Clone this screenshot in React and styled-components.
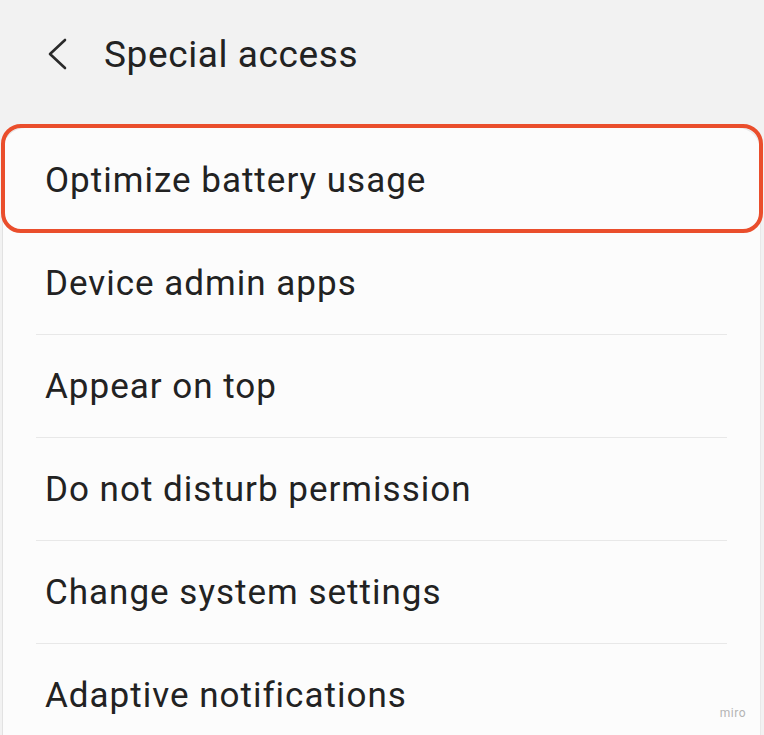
import { styled, createGlobalStyle } from 'styled-components';

const GlobalStyle = createGlobalStyle`
    html, body {
        margin: 0;
        padding: 0;
        background: #f2f2f2;
        font-family: Roboto, "Noto Sans", sans-serif;
    }
`;

const Page = styled.div`
    width: 764px;
    height: 735px;
    overflow: hidden;
    position: relative;
    background: #f2f2f2;
`;

const Header = styled.div`
    display: flex;
    align-items: center;
    height: 108px;
    padding-left: 46px;
    gap: 34px;
`;

const BackButton = styled.div`
    display: flex;
    align-items: center;
    width: 24px;
    height: 34px;
`;

const Title = styled.h1`
    margin: 0;
    font-size: 37px;
    font-weight: 400;
    color: #222;
    letter-spacing: 0.6px;
`;

const Card = styled.div`
    margin: 20px 4px 0 3px;
    background: #fcfcfc;
    border-radius: 22px 22px 0 0;
    box-shadow: -1px 0 0 #e2e2e2, 1px 0 0 #e8e8e8, 0 -1px 0 #e8e8e8;
    height: 620px;
`;

const Row = styled.div`
    position: relative;
    display: flex;
    align-items: center;
    height: 102px;
    margin: 0 33px;
    padding-left: 9px;
    border-top: 1px solid ${(p) => (p.$plain ? 'transparent' : '#e8e8e8')};
    font-size: 35px;
    letter-spacing: 1px;
    color: #222;

    ${(p) =>
        p.$highlighted &&
        `
        &::after {
            content: '';
            position: absolute;
            top: -5px;
            left: -35px;
            right: -36px;
            bottom: -2px;
            border: 4px solid #ea4e2c;
            border-radius: 20px;
        }
    `}
`;

const Watermark = styled.div`
    position: absolute;
    right: 18px;
    bottom: 15px;
    font-size: 12px;
    color: #b4b4b4;
    letter-spacing: 0.5px;
`;

const items = [
    'Optimize battery usage',
    'Device admin apps',
    'Appear on top',
    'Do not disturb permission',
    'Change system settings',
    'Adaptive notifications',
];

function App() {
    return (
        <Page>
            <GlobalStyle />
            <Header>
                <BackButton>
                    <svg width="22" height="34" viewBox="0 0 22 34">
                        <path d="M19 3 L4 17 L19 31" fill="none" stroke="#2a2a2a" strokeWidth="2.6" strokeLinecap="round" strokeLinejoin="round" />
                    </svg>
                </BackButton>
                <Title>Special access</Title>
            </Header>
            <Card>
                {items.map((label, i) => (
                    <Row key={label} $plain={i < 2} $highlighted={i === 0}>
                        {label}
                    </Row>
                ))}
            </Card>
            <Watermark>miro</Watermark>
        </Page>
    );
}

export default App;
